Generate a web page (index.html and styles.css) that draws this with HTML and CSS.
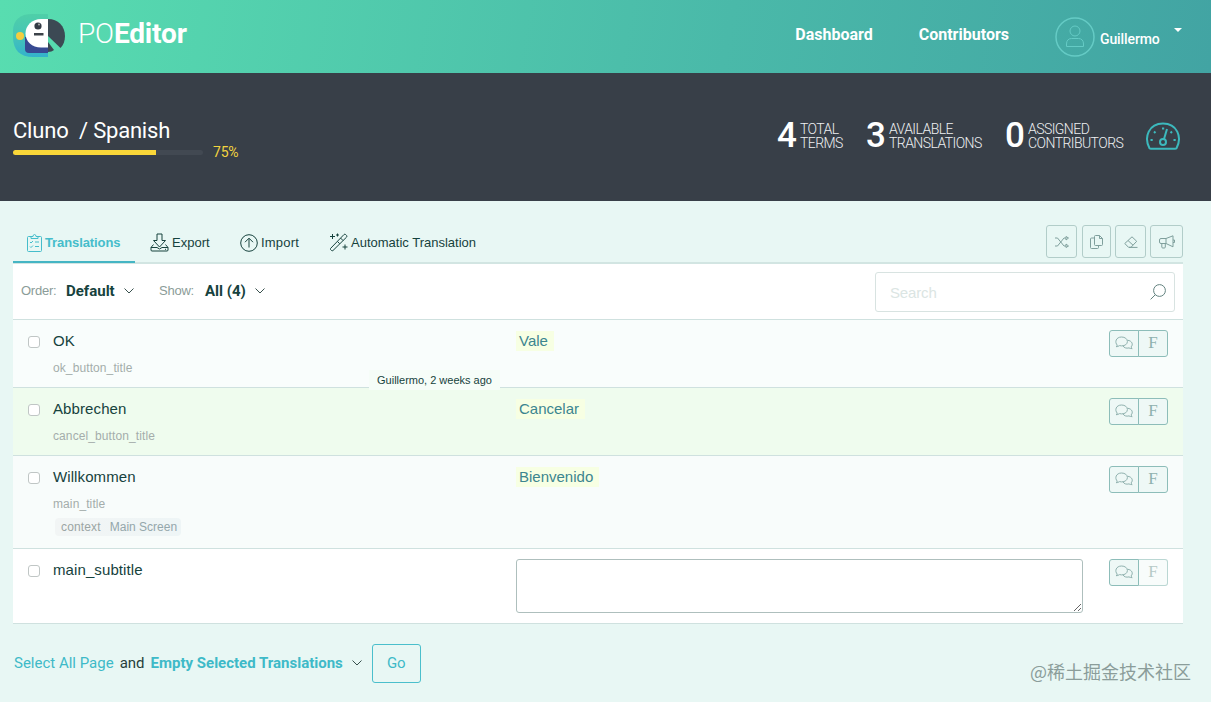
FILE: index.html
```html
<!DOCTYPE html>
<html lang="en">
<head>
  <meta charset="UTF-8" />
  <meta name="viewport" content="width=device-width, initial-scale=1.0" />
  <title>Cluno / Spanish - POEditor</title>
  <link rel="stylesheet" href="styles.css">
</head>
<body>
  <!-- shared icons -->
  <svg class="sprite" width="0" height="0">
    <symbol id="chevron" viewBox="0 0 12 8"><path d="M1.500 1.500L6 6l4.500-4.500" /></symbol>
    <symbol id="comments" viewBox="0 0 18 14">
      <path d="M2.3 9.2C-.6 6.2.9 1 6.6 1c3.3 0 5.800 1.900 5.800 4.500S10 9.900 6.600 9.900c-.8 0-1.500-.1-2.100-.3C3.500 10.400 2.200 10.800 1 10.700c.7-.4 1.100-.9 1.300-1.500z" />
      <path d="M12.500 4.300c4.600.3 6 4.300 3.600 6.600.1.800.5 1.300 1.100 1.700-1.300.1-2.300-.1-3.200-.7-2.600.7-5.100-.1-6-2" />
    </symbol>
  </svg>

  <header class="topbar">
    <a class="brand" href="#">
      <svg class="logo" width="53" height="44" viewBox="0 0 53 44">
        <defs>
          <linearGradient id="logoBg" x1="0" y1="0" x2="0" y2="1">
            <stop offset="0" stop-color="#4fcfa8" />
            <stop offset=".5" stop-color="#45c5b6" />
            <stop offset="1" stop-color="#33b2cc" />
          </linearGradient>
        </defs>
        <path fill="url(#logoBg)" d="M35 0v43H20C7 43 0 36 0 23v-6C0 6 7 0 19 0z" />
        <path fill="#374a92" d="M12 23h23v16H16q-4 0-4-4z" />
        <path fill="#fff" d="M35 5v28.500h-7C19 33.500 12.500 27.500 12.500 19.500S19 5 28 5z" />
        <path fill="#3c4954" d="M35 5c10 0 17 7 17 17 0 5-1.500 9-4.500 12L35 22z" />
        <path fill="#3c4954" d="M35 28l6 8c-1.500 1.300-3.500 2-6 2z" />
        <circle cx="7" cy="22" r="4" fill="#f3cd3f" />
        <circle cx="25" cy="12" r="3.600" fill="#333b45" />
        <circle cx="26" cy="10.500" r="1" fill="#aaa" />
        <path fill="#3c4249" d="M21 19h9.500v2.500H21z" />
      </svg>
      <span class="brand-name">PO<b>Editor</b></span>
    </a>
    <nav class="topnav">
      <a class="nav-dashboard" href="#">Dashboard</a>
      <a class="nav-contributors" href="#">Contributors</a>
      <a class="user" href="#">
        <svg class="avatar" width="40" height="40" viewBox="0 0 40 40">
          <circle cx="20" cy="20" r="19" stroke-width="1.500" />
          <circle cx="20" cy="14" r="5" />
          <path d="M11.500 29.500v-2.500c0-3.500 2-5.500 5-5.500h7c3 0 5 2 5 5.500v2.500z" />
        </svg>
        <span class="user-name">Guillermo</span>
        <span class="caret"></span>
      </a>
    </nav>
  </header>

  <section class="project">
    <div class="project-info">
      <h1>Cluno&nbsp; / Spanish</h1>
      <div class="progress">
        <div class="bar"><div class="bar-fill" style="width: 75%"></div></div>
        <span class="percent">75%</span>
      </div>
    </div>
    <div class="stats">
      <div class="stat terms"><strong>4</strong><span>TOTAL<br>TERMS</span></div>
      <div class="stat available"><strong>3</strong><span>AVAILABLE<br>TRANSLATIONS</span></div>
      <div class="stat assigned"><strong>0</strong><span>ASSIGNED<br>CONTRIBUTORS</span></div>
      <svg class="gauge" width="36" height="28" viewBox="0 0 36 28">
        <path d="M4.500 26.200C-1.500 15 4 1.500 18 1.500S37.500 15 31.500 26.200q-.5.500-1.500.5H6q-1 0-1.500-.5z" />
        <circle cx="18" cy="20" r="3" />
        <path d="M19 17l3-10" />
        <path class="ticks" d="M5.500 18h2.200M9 9.500l1.500 1.500M17 6.500h2.200M27 9.500L25.500 11M28.500 18h2.200" />
      </svg>
    </div>
  </section>

  <main>
    <div class="tabs">
      <a class="tab active" href="#">
        <svg width="15" height="18" viewBox="0 0 15 18">
          <path d="M4 2.500H1.500q-1 0-1 1v13q0 1 1 1h12q1 0 1-1v-13q0-1-1-1H11M4 4.500v-2h2q0-2 1.500-2T9 2.500h2v2z" />
          <path d="M3 8l1 1 2-2M8 8h4M3 12.500l1 1 2-2M8 12.500h4" />
        </svg>
        <span>Translations</span>
      </a>
      <a class="tab export" href="#">
        <svg width="19" height="19" viewBox="0 0 19 19">
          <path d="M7 1h5v6.500h3.500L9.500 14 3.500 7.500H7zM3.500 11.500L1 14.500V17q0 1 1 1h15q1 0 1-1v-2.500h-6L9.500 16 7 14.500H1M18 14.500l-2.500-3M15 16.300h1" />
        </svg>
        <span>Export</span>
      </a>
      <a class="tab import" href="#">
        <svg width="18" height="18" viewBox="0 0 18 18">
          <circle cx="9" cy="9" r="8.300" /><path d="M9 13.500v-9M5 8.200l4-4 4 4" />
        </svg>
        <span>Import</span>
      </a>
      <a class="tab auto" href="#">
        <svg width="19" height="19" viewBox="0 0 19 19">
          <path d="M1.500 15.500L15 1.500q.8-.6 1.600 0l1 1q.6.800 0 1.600L4 17.500q-.8.600-1.500 0l-1-1q-.5-.5 0-1zM11.500 5l2.600 2.600M3.500 1v5M1 3.500h5M8.500.5v3M7 2h3M16 11.500v5M13.500 14h5M8.500 8.500l2.200 2.200" />
        </svg>
        <span>Automatic Translation</span>
      </a>
      <div class="tools">
        <button class="tool"><svg width="14" height="12" viewBox="0 0 14 12"><path d="M0 2h2.500l6.500 8h2M0 10h2.500L9 2h2" /><path d="M11 .5L13.500 2 11 4zM11 8l2.500 2-2.500 1.500z" /></svg></button>
        <button class="tool copy"><svg width="13" height="14" viewBox="0 0 13 14"><path d="M5.500.5h4l3 3v6q0 1-1 1h-6q-1 0-1-1v-8q0-1 1-1zM9.500.5v3h3M4.500 3h-3q-1 0-1 1v8.500q0 1 1 1h6q1 0 1-1v-2" /></svg></button>
        <button class="tool"><svg width="14" height="12" viewBox="0 0 14 12"><path d="M8 .8l4.700 4.500-5.700 6H4.500L.8 7.500zM4 4.500l5 4.700M5 11.400h8.500" /></svg></button>
        <button class="tool wide"><svg width="16" height="14" viewBox="0 0 16 14"><path d="M2 3.500h5L14 .8v11L7 8.500H2Q.5 8.500.5 7V5Q.5 3.500 2 3.500zM7 3.500v5M2.800 8.500V12q0 1 1 1h1.500q1 0 1-1V8.500M14 5h1.500v2.500H14" /></svg></button>
      </div>
    </div>

    <div class="panel">
      <div class="filters">
        <span class="label order">Order:</span>
        <b class="value-order">Default</b>
        <svg class="chevron"><use href="#chevron" /></svg>
        <span class="label show">Show:</span>
        <b class="value-show">All (4)</b>
        <svg class="chevron"><use href="#chevron" /></svg>
        <div class="search">
          <span>Search</span>
          <svg width="16" height="16" viewBox="0 0 16 16"><circle cx="9.500" cy="6.500" r="5.900" /><path d="M5.300 10.700L.6 15.400" /></svg>
        </div>
      </div>

      <div class="row">
        <i class="check"></i>
        <div class="term"><p>OK</p><small>ok_button_title</small></div>
        <div class="translation"><span>Vale</span></div>
        <div class="actions"><span><svg><use href="#comments" /></svg></span><span class="fuzzy">F</span></div>
      </div>
      <div class="row selected">
        <div class="tip">Guillermo, 2 weeks ago</div>
        <i class="check"></i>
        <div class="term"><p>Abbrechen</p><small>cancel_button_title</small></div>
        <div class="translation"><span>Cancelar</span></div>
        <div class="actions"><span><svg><use href="#comments" /></svg></span><span class="fuzzy">F</span></div>
      </div>
      <div class="row has-context">
        <i class="check"></i>
        <div class="term">
          <p>Willkommen</p>
          <small>main_title</small>
          <div class="context"><span>context</span><span class="where">Main Screen</span></div>
        </div>
        <div class="translation"><span>Bienvenido</span></div>
        <div class="actions"><span><svg><use href="#comments" /></svg></span><span class="fuzzy">F</span></div>
      </div>
      <div class="row empty">
        <i class="check"></i>
        <div class="term"><p>main_subtitle</p></div>
        <div class="translation"><textarea></textarea></div>
        <div class="actions"><span><svg><use href="#comments" /></svg></span><span class="fuzzy off">F</span></div>
      </div>
    </div>

    <div class="bulk">
      <a class="select-all" href="#">Select All Page</a>
      <span class="and">and</span>
      <b>Empty Selected Translations</b>
      <svg class="chevron"><use href="#chevron" /></svg>
      <button class="go">Go</button>
      <span class="credit">@稀土掘金技术社区</span>
    </div>
  </main>
</body>
</html>
```
FILE: styles.css
```css
* {
  box-sizing: border-box;
}

body {
  margin: 0;
  height: 702px;
  overflow: hidden;
  font-family: Roboto, sans-serif;
  background-color: #e8f7f4;
  color: #16423d;
}

a {
  color: inherit;
  text-decoration: none;
}

p {
  margin: 0;
}

svg {
  fill: none;
  stroke: currentColor;
  flex: none;
}

.sprite {
  position: absolute;
}

.chevron {
  width: 12px;
  height: 8px;
  color: #38504d;
}

/* top bar */
.topbar {
  display: flex;
  justify-content: space-between;
  height: 73px;
  padding: 14px 29px 0 13px;
  background: linear-gradient(100deg, #58ddb0 0%, #4ab9a9 60%, #42a4a3 100%);
  color: #fff;
}

.brand {
  display: flex;
}

.logo {
  stroke: none;
}

.brand-name {
  margin-left: 12px;
  font-size: 28px;
  line-height: 40px;
  font-weight: 300;
  letter-spacing: -0.15px;
}

.brand-name b {
  font-weight: 700;
}

.topnav {
  display: flex;
  font-size: 16px;
  font-weight: 700;
  line-height: 42px;
}

.nav-contributors {
  margin-left: 46px;
}

.user {
  display: flex;
  margin: 3px 0 0 46px;
  font-size: 14px;
  font-weight: 500;
  line-height: 40px;
}

.avatar {
  color: #65cbc5;
}

.user-name {
  width: 61px;
  margin: 2px 13px 0 5px;
  letter-spacing: -0.1px;
}

.caret {
  height: 0;
  margin-top: 11px;
  border: 4px solid transparent;
  border-top-color: #fff;
  border-bottom: none;
}

/* project summary */
.project {
  display: flex;
  justify-content: space-between;
  height: 128px;
  padding: 43px 30px 0 13px;
  background-color: #383f48;
  color: #fff;
}

.project h1 {
  margin: 1px 0 -1px;
  font-size: 22px;
  font-weight: 400;
  line-height: 28px;
  letter-spacing: -0.2px;
}

.progress {
  display: flex;
  align-items: center;
  height: 16px;
}

.bar {
  width: 190px;
  height: 5px;
  border-radius: 3px;
  background-color: #424952;
  overflow: hidden;
}

.bar-fill {
  height: 5px;
  background-color: #fad739;
}

.percent {
  margin-left: 10px;
  font-size: 14px;
  letter-spacing: -0.2px;
  color: #f3d53f;
}

.stats {
  display: flex;
  align-items: flex-start;
}

.stat {
  display: flex;
  height: 39px;
  align-items: center;
}

.stat strong {
  width: 23px;
  font-size: 35px;
  font-weight: 500;
  letter-spacing: -0.5px;
}

.stat span {
  font-size: 14px;
  line-height: 14px;
  font-weight: 300;
  letter-spacing: -0.56px;
  white-space: nowrap;
  color: #eef0f2;
}

.terms {
  width: 89px;
}

.available {
  width: 139px;
}

.assigned {
  width: 140px;
}

.gauge {
  margin-top: 6px;
  stroke: #3cb9bd;
  stroke-width: 2;
}

.gauge .ticks {
  stroke-width: 2;
}

/* tabs */
main {
  padding: 21px 28px 0 13px;
}

.tabs {
  display: flex;
  height: 42px;
  border-bottom: 2px solid #d2e5e2;
  font-family: "Liberation Sans", sans-serif;
  font-size: 13px;
}

.tab {
  display: flex;
  align-items: center;
  height: 41px;
  margin-left: 15px;
  white-space: nowrap;
}

.tab svg {
  margin-right: 3px;
}

.tab.active {
  width: 122px;
  margin-left: 0;
  padding: 2px 0 0 14px;
  border-bottom: 2px solid #45b5c4;
  color: #45bdcb;
  font-weight: 700;
  letter-spacing: -0.1px;
}

.export {
  width: 75px;
}

.import {
  width: 75px;
}

.import span {
  letter-spacing: 0.2px;
}

.auto {
  margin-left: 14px;
}

.tools {
  display: flex;
  gap: 4px;
  height: 33px;
  margin: 3px 0 0 auto;
}

.tool {
  display: flex;
  align-items: center;
  justify-content: center;
  width: 31px;
  padding: 0;
  border: 1px solid #b2cdc9;
  border-radius: 3px;
  background: none;
  color: #7f9f9c;
}

.copy {
  width: 29px;
  margin-left: 1px;
}

.wide {
  width: 33px;
}

/* terms list */
.filters {
  display: flex;
  align-items: center;
  height: 55px;
  padding: 0 8px 2px;
  background-color: #fff;
}

.label {
  font-family: "Liberation Sans", sans-serif;
  font-size: 13px;
  letter-spacing: -0.25px;
  color: #8b9c98;
}

.order {
  width: 45px;
}

.show {
  width: 46px;
  margin-left: 24px;
}

.value-order,
.value-show {
  font-size: 15px;
  margin-right: 8px;
}

.value-order {
  width: 49px;
}

.value-show {
  width: 41px;
}

.search {
  display: flex;
  align-items: center;
  justify-content: space-between;
  width: 300px;
  height: 40px;
  margin: 3px 0 0 auto;
  padding: 0 8px 0 14px;
  border: 1px solid #d8e3e1;
  border-radius: 3px;
  font-family: "Liberation Sans", sans-serif;
  font-size: 15px;
  letter-spacing: -0.15px;
  color: #dbe5e3;
}

.search svg {
  color: #62827f;
}

.row {
  position: relative;
  display: flex;
  height: 68px;
  padding: 0 15px;
  border-top: 1px solid #cfe1df;
  background-color: #f9fdfc;
  font-family: "Liberation Sans", sans-serif;
}

.selected {
  background-color: #effcee;
}

.has-context {
  height: 93px;
  background-color: #f8fcfb;
}

.empty {
  height: 76px;
  border-bottom: 1px solid #cfe1df;
  background-color: #fff;
}

.check {
  width: 12px;
  height: 12px;
  margin-top: 16px;
  border: 1px solid #c0c6c5;
  border-radius: 3px;
  background-color: #fff;
}

.term {
  width: 463px;
  margin-left: 13px;
}

.term p {
  margin-top: 11px;
  font-size: 15px;
  line-height: 20px;
  letter-spacing: 0.1px;
}

.term small {
  display: block;
  margin-top: 10px;
  font-size: 12px;
  line-height: 14px;
  letter-spacing: 0.1px;
  color: #a4adab;
}

.context {
  display: flex;
  width: 126px;
  height: 18px;
  margin: 7px 0 0 2px;
  padding-left: 6px;
  gap: 9px;
  border-radius: 4px;
  background: linear-gradient(90deg, #f2f5f5, #eef5f6);
  font-size: 12px;
  line-height: 18px;
  letter-spacing: 0.15px;
  white-space: nowrap;
  color: #9ba5a4;
}

.context .where {
  letter-spacing: 0;
  color: #94a7ab;
}

.translation {
  width: 567px;
}

.translation span {
  display: inline-block;
  margin-top: 11px;
  padding: 0 6px 0 3px;
  background-color: #f7ffe3;
  font-size: 15px;
  line-height: 20px;
  color: #3c858f;
}

.translation textarea {
  display: block;
  width: 567px;
  height: 54px;
  margin: 10px 0 0;
  border: 1px solid #aebfbd;
  border-radius: 3px;
  background-color: #fff;
}

.actions {
  display: flex;
  width: 59px;
  height: 27px;
  margin: 10px 0 0 auto;
}

.actions span {
  display: flex;
  align-items: center;
  justify-content: center;
  width: 30px;
  border: 1px solid #8dbdb9;
  border-radius: 3px 0 0 3px;
  background-color: #eef8f6;
  color: #8fb1ae;
}

.actions svg {
  width: 18px;
  height: 14px;
  margin-top: -2px;
}

.actions .fuzzy {
  margin-left: -1px;
  padding-bottom: 1px;
  border-radius: 0 3px 3px 0;
  font-family: "Liberation Serif", serif;
  font-size: 17px;
}

.actions .off {
  border-color: #bad7d3;
  border-left-color: #8dbdb9;
  background-color: #f8fcfb;
  color: #b6cac7;
}

.tip {
  position: absolute;
  top: -18px;
  left: 356px;
  width: 131px;
  height: 20px;
  background-color: #f6fdf8;
  font-size: 11px;
  line-height: 20px;
  text-align: center;
  white-space: nowrap;
}

/* bulk actions */
.bulk {
  display: flex;
  align-items: center;
  height: 39px;
  margin-top: 20px;
  padding-left: 1px;
  font-size: 15px;
  line-height: 18px;
  color: #3ebac8;
  white-space: nowrap;
}

.select-all,
.and,
.bulk b {
  margin-bottom: 2px;
}

.and {
  margin-left: 6px;
  margin-right: 6px;
  color: #263f3b;
}

.bulk .chevron {
  margin: 0 9px 2px 8px;
}

.go {
  width: 49px;
  height: 39px;
  padding-bottom: 3px;
  border: 1px solid #4abfcc;
  border-radius: 3px;
  background: none;
  font: inherit;
  color: inherit;
}

.credit {
  margin: 14px -8px 0 auto;
  font-family: "Noto Sans CJK SC", sans-serif;
  font-size: 18px;
  font-weight: 400;
  line-height: 24px;
  color: #8b9d9a;
}
```
